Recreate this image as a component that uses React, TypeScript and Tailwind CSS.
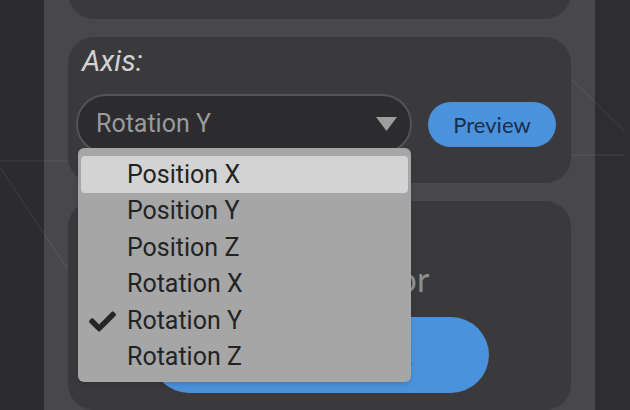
import { FaCheck } from "react-icons/fa";

const options = [
  "Position X",
  "Position Y",
  "Position Z",
  "Rotation X",
  "Rotation Y",
  "Rotation Z",
];

function SceneLines() {
  return (
    <svg
      className="pointer-events-none absolute inset-0 z-0"
      width="630"
      height="410"
      viewBox="0 0 630 410"
    >
      <g stroke="rgba(255,255,255,0.09)" strokeWidth="1" fill="none">
        <line x1="0" y1="161" x2="70" y2="161" />
        <line x1="0" y1="167" x2="67" y2="268" />
        <line x1="572" y1="80" x2="625" y2="131" />
        <line x1="572" y1="155" x2="625" y2="155" />
      </g>
    </svg>
  );
}

function AxisCard() {
  const selected = "Rotation Y";
  const highlighted = "Position X";
  return (
    <div className="relative z-20 rounded-[26px] bg-[#3a3a3d] pt-[8px] pl-[8px] pr-[15px] pb-[29px]">
      <div className="ml-[6px] h-[32px] font-['Roboto'] text-[29px] italic leading-[32px] text-[#d2d2d2]">
        Axis:
      </div>
      <div className="mt-[17px] flex items-center gap-[16px]">
        <div className="relative">
          <div className="flex h-[60px] w-[336px] items-center justify-between rounded-full border-2 border-[#545457] bg-[#2c2c2f] pl-[18px] pr-[13px]">
            <span className="font-['Roboto'] text-[25px] text-[#9b9b9b]">{selected}</span>
            <svg width="21" height="14" viewBox="0 0 21 14">
              <polygon points="0,0 21,0 10.5,14" fill="#9e9e9e" />
            </svg>
          </div>
          <div className="absolute left-[2px] top-[54px] w-[333px] rounded-[6px] bg-[#a6a6a6] px-[3px] pt-[8px] pb-[7px] shadow-md">
            {options.map((o) => (
              <div
                key={o}
                className={
                  o === highlighted
                    ? "flex h-[36.5px] items-center rounded-[4px] bg-[#d3d3d3]"
                    : "flex h-[36.5px] items-center"
                }
              >
                <span className="flex w-[46px] justify-start pl-[8px] pt-[2px] text-[#262626]">
                  {o === selected && <FaCheck size={27} />}
                </span>
                <span className="font-['Roboto'] text-[25px] text-[#232323]">{o}</span>
              </div>
            ))}
          </div>
        </div>
        <button className="h-[45px] w-[128px] rounded-full bg-[#4b92dc] font-['Lato'] text-[22px] text-[#1b2d48]">
          Preview
        </button>
      </div>
    </div>
  );
}

function SensorCard() {
  return (
    <div className="relative z-10 flex h-[260px] flex-col items-center rounded-[26px] bg-[#3a3a3d] pt-[58px]">
      <div className="h-[40px] font-['Lato'] text-[34px] leading-[40px] text-[#8e8e8e]">
        Motion Sensor
      </div>
      <button className="mt-[18px] h-[76px] w-[338px] rounded-full bg-[#4b92dc] font-['Lato'] text-[28px] text-[#1b2d48]">
        Connect Robot
      </button>
    </div>
  );
}

export default function App() {
  return (
    <div className="relative flex h-[410px] w-[630px] overflow-hidden bg-[#2c2c2f]">
      <div className="w-[44px] shrink-0" />
      <div className="flex w-[551px] shrink-0 flex-col gap-[18px] bg-[#48484c] px-[24px]">
        <div className="relative z-10 -mt-[81px] h-[100px] shrink-0 rounded-[26px] bg-[#3a3a3d]" />
        <AxisCard />
        <SensorCard />
      </div>
      <div className="flex-1 bg-[#2e2e31]" />
      <SceneLines />
    </div>
  );
}
